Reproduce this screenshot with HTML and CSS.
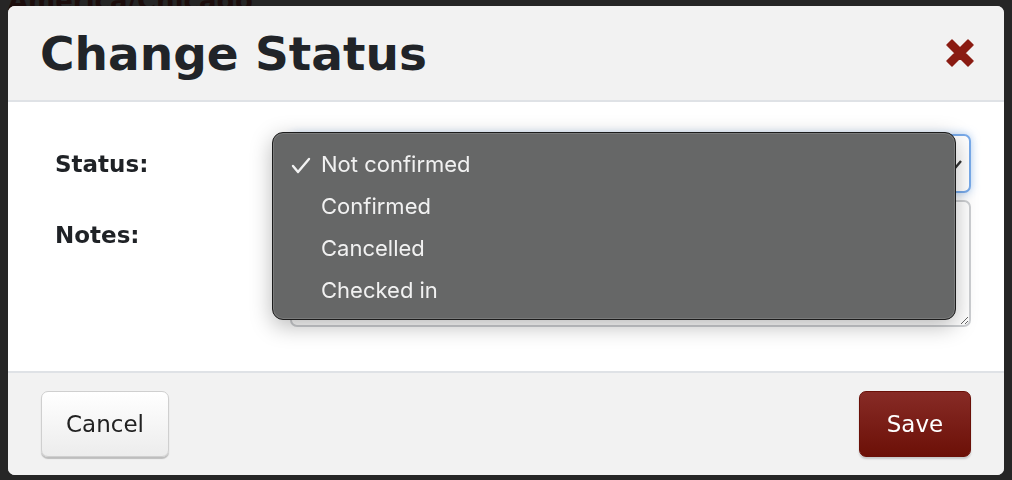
FILE: index.html
```html
<!DOCTYPE html>
<html lang="en">
<head>
    <meta charset="UTF-8">
    <meta name="viewport" content="width=device-width, initial-scale=1.0">
    <title>Change Status</title>
    <link rel="stylesheet" href="styles.css">
</head>
<body>
    <div class="page">
        <h2 class="page-title">America/Chicago</h2>
    </div>

    <div class="modal">
        <div class="modal-header">
            <h1>Change Status</h1>
            <button class="close" aria-label="Close">
                <svg width="34" height="34" viewBox="0 0 34 34">
                    <path d="M4 9 L9 4 L17 12 L25 4 L30 9 L22 17 L30 25 L25 30 L17 22 L9 30 L4 25 L12 17 Z" fill="#8a1b12" stroke="#8a1b12" stroke-width="1.5" stroke-linejoin="round"/>
                </svg>
            </button>
        </div>

        <div class="modal-body">
            <div class="row">
                <label class="label">Status:</label>
                <div class="field">
                    <div class="select">
                        <svg class="arrow" width="14" height="12" viewBox="0 0 14 12">
                            <polyline points="2,3 7,9 12,3" fill="none" stroke="#333" stroke-width="2.4"/>
                        </svg>
                    </div>

                    <!-- open option list -->
                    <ul class="menu">
                        <li class="selected">
                            <svg class="check" width="20" height="18" viewBox="0 0 20 18">
                                <polyline points="2,9 7,15 18,2" fill="none" stroke="#f2f2f2" stroke-width="2.4" stroke-linecap="round" stroke-linejoin="round"/>
                            </svg>
                            Not confirmed
                        </li>
                        <li>Confirmed</li>
                        <li>Cancelled</li>
                        <li>Checked in</li>
                    </ul>
                </div>
            </div>
            <div class="row">
                <label class="label notes-label">Notes:</label>
                <div class="field">
                    <textarea rows="4"></textarea>
                </div>
            </div>
        </div>

        <div class="modal-footer">
            <button class="btn btn-cancel">Cancel</button>
            <button class="btn btn-save">Save</button>
        </div>
    </div>
</body>
</html>
```

FILE: styles.css
```css
/* Page behind the dialog */
body {
    margin: 0;
    background-color: #262626;
    font-family: "DejaVu Sans", Verdana, sans-serif;
    overflow: hidden;
    height: 100vh;
}

.page {
    padding: 0 8px;
}

.page-title {
    margin: -14px 0 0;
    font-size: 26px;
    color: #1c0d0c;
}

/* Dialog */
.modal {
    position: fixed;
    left: 8px;
    top: 6px;
    width: 996px;
    height: 469px;
    border-radius: 7px;
    overflow: hidden;
    background-color: #fff;
    display: flex;
    flex-direction: column;
}

.modal-header {
    height: 94px;
    background-color: #f2f2f2;
    border-bottom: 2px solid #dfe2e6;
    display: flex;
    align-items: center;
    justify-content: space-between;
    padding: 0 27px 0 32px;
}

.modal-header h1 {
    margin: 0;
    font-size: 47px;
    font-weight: bold;
    color: #212428;
}

.close {
    background: none;
    border: none;
    padding: 0;
    display: flex;
    cursor: pointer;
}

.modal-body {
    flex: 1;
    padding: 32px 33px 0 47px;
}

.row {
    display: flex;
    align-items: center;
    margin-bottom: 7px;
}

.label {
    width: 235px;
    font-size: 23px;
    font-weight: bold;
    color: #1f2226;
}

.notes-label {
    align-self: flex-start;
    padding-top: 22px;
}

.field {
    flex: 1;
    position: relative;
}

.select {
    height: 55px;
    border: 2px solid #78aaea;
    border-radius: 7px;
    box-shadow: 0 0 8px rgba(110, 165, 235, 0.55);
    background-color: #fff;
    display: flex;
    align-items: center;
    justify-content: flex-end;
    padding: 0 6px 0 20px;
}

textarea {
    display: block;
    width: 100%;
    box-sizing: border-box;
    height: 127px;
    border: 2px solid #cdcfd2;
    border-radius: 7px;
    font-family: "DejaVu Sans", sans-serif;
    font-size: 20px;
    padding: 10px;
}

/* Native-looking open option list */
.menu {
    position: absolute;
    z-index: 10;
    left: -18px;
    top: -2px;
    width: 684px;
    height: 188px;
    box-sizing: border-box;
    margin: 0;
    padding: 10px 0 0 48px;
    list-style: none;
    background-color: #666767;
    border: 1px solid #1c1c1c;
    border-radius: 11px;
    box-shadow: inset 0 0 0 1px #7a7b7b, 0 6px 22px rgba(0, 0, 0, 0.28);
    font-family: Inter, "Noto Sans", sans-serif;
    font-size: 22px;
    line-height: 42px;
    color: #f1f1f1;
}

.menu li {
    position: relative;
}

.check {
    position: absolute;
    left: -30px;
    top: 14px;
}

/* Footer buttons */
.modal-footer {
    height: 102px;
    background-color: #f2f2f2;
    border-top: 2px solid #dfe2e6;
    display: flex;
    align-items: center;
    justify-content: space-between;
    padding: 0 33px;
}

.btn {
    height: 66px;
    border-radius: 7px;
    font-family: "DejaVu Sans", Verdana, sans-serif;
    font-size: 23px;
    cursor: pointer;
}

.btn-cancel {
    width: 128px;
    color: #222;
    background: linear-gradient(#ffffff, #ececec);
    border: 1px solid #cfcfcf;
    box-shadow: 0 2px 1px rgba(0, 0, 0, 0.22);
}

.btn-save {
    width: 112px;
    color: #fff;
    background: linear-gradient(#872b26, #6c1007);
    border: 1px solid #6a1008;
    box-shadow: 0 2px 2px rgba(0, 0, 0, 0.18);
}
```
